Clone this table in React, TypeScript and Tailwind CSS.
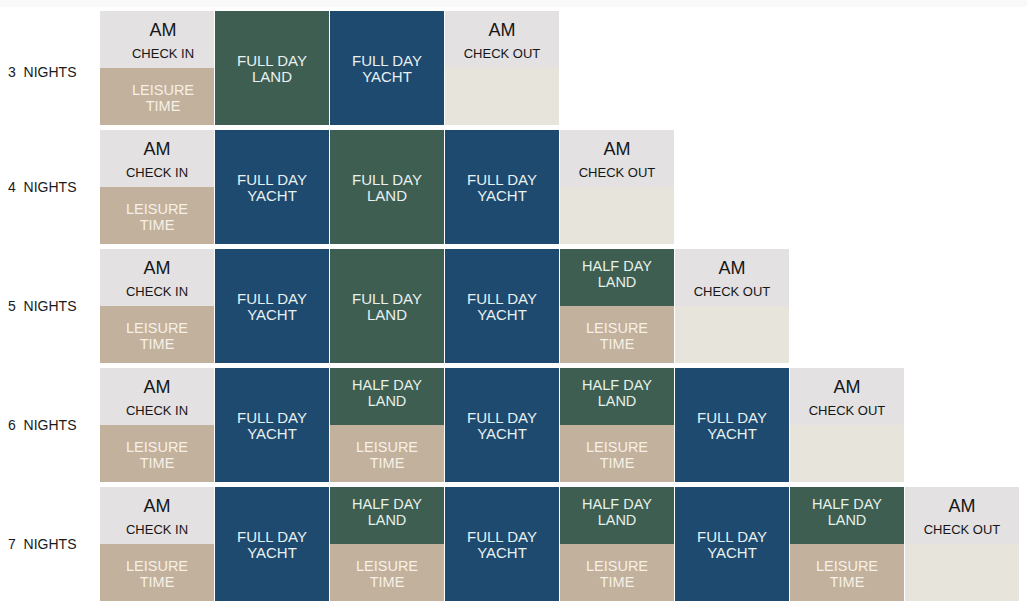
type Cell =
  | { kind: "checkin" }
  | { kind: "checkout" }
  | { kind: "full"; tone: "land" | "yacht" }
  | { kind: "half" };

const ci: Cell = { kind: "checkin" };
const co: Cell = { kind: "checkout" };
const land: Cell = { kind: "full", tone: "land" };
const yacht: Cell = { kind: "full", tone: "yacht" };
const half: Cell = { kind: "half" };

const rows: { label: string; cells: Cell[] }[] = [
  { label: "3 NIGHTS", cells: [ci, land, yacht, co] },
  { label: "4 NIGHTS", cells: [ci, yacht, land, yacht, co] },
  { label: "5 NIGHTS", cells: [ci, yacht, land, yacht, half, co] },
  { label: "6 NIGHTS", cells: [ci, yacht, half, yacht, half, yacht, co] },
  { label: "7 NIGHTS", cells: [ci, yacht, half, yacht, half, yacht, half, co] },
];

function Leisure({ nudge }: { nudge?: boolean }) {
  return (
    <div
      className={`flex h-[57px] flex-col items-center justify-center bg-[#c2b19d] pt-[3px] text-[14.5px] leading-[16px] text-[#f7f0e6] ${nudge ? "pl-[12px]" : ""}`}
    >
      <span>LEISURE</span>
      <span>TIME</span>
    </div>
  );
}

function Block({ cell, first }: { cell: Cell; first: boolean }) {
  if (cell.kind === "checkin" || cell.kind === "checkout") {
    return (
      <div className="flex w-[114px] flex-col">
        <div
          className={`flex h-[57px] flex-col items-center justify-start bg-[#e3e1e2] pt-[8px] text-[#161616] ${first && cell.kind === "checkin" ? "pl-[12px]" : ""}`}
        >
          <span className="text-[18px] leading-[23px]">AM</span>
          <span className="text-[13px] leading-[23px]">
            {cell.kind === "checkin" ? "CHECK IN" : "CHECK OUT"}
          </span>
        </div>
        {cell.kind === "checkin" ? (
          <Leisure nudge={first} />
        ) : (
          <div className="h-[57px] bg-[#e7e4dc]" />
        )}
      </div>
    );
  }
  if (cell.kind === "half") {
    return (
      <div className="flex w-[114px] flex-col">
        <div className="flex h-[57px] flex-col items-center justify-center bg-[#3e5e51] pb-[7px] text-[14.5px] leading-[16px] text-[#e6f2ea]">
          <span>HALF DAY</span>
          <span>LAND</span>
        </div>
        <Leisure />
      </div>
    );
  }
  const bg = cell.tone === "land" ? "bg-[#3e5e51]" : "bg-[#1d4a6e]";
  return (
    <div
      className={`flex w-[114px] flex-col items-center justify-center pt-[1px] text-[15px] leading-[16px] text-[#e8f1f3] ${bg}`}
    >
      <span>FULL DAY</span>
      <span>{cell.tone === "land" ? "LAND" : "YACHT"}</span>
    </div>
  );
}

export default function App() {
  return (
    <main
      className="h-[612px] w-[1027px] overflow-hidden bg-white"
      style={{ fontFamily: '"Liberation Sans", Arial, sans-serif' }}
    >
      <div className="h-[7px] bg-[#f9f9f9]" />
      <div className="flex flex-col gap-[5px] pt-[4px]">
        {rows.map((row, r) => (
          <div key={row.label} className="flex h-[114px]">
            <div
              className={`flex w-[100px] items-center pl-[8px] text-[14px] text-[#1a1a1a] ${r === 0 ? "pt-[8px]" : ""}`}
            >
              {row.label.split(" ")[0]}&nbsp;&nbsp;{row.label.split(" ")[1]}
            </div>
            <div className="flex gap-[1px]">
              {row.cells.map((c, i) => (
                <Block key={i} cell={c} first={r === 0} />
              ))}
            </div>
          </div>
        ))}
      </div>
    </main>
  );
}
